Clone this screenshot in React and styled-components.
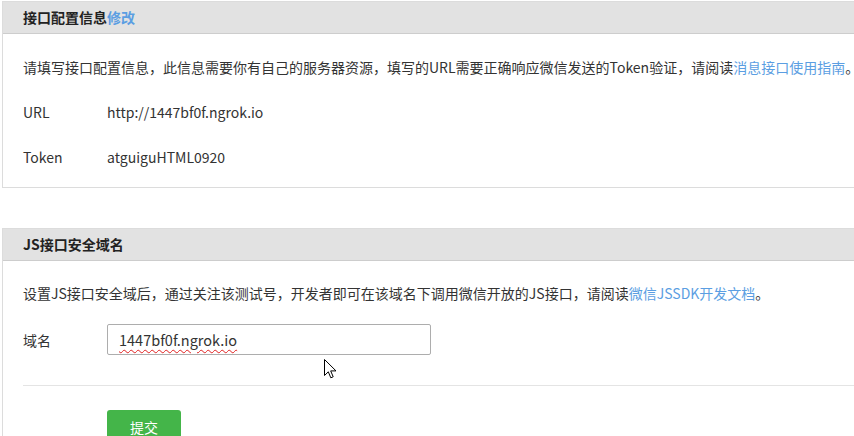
import React from 'react';
import styled, { createGlobalStyle } from 'styled-components';

/********** Styling **********/
const GlobalStyle = createGlobalStyle`
  html, body {
    margin: 0;
    padding: 0;
    background: #fff;
    overflow: hidden;
  }
  body {
    font-family: "Noto Sans CJK SC", "Noto Sans", sans-serif;
    font-size: 14px;
    color: #222;
  }
`
const Page = styled.div`
  position: relative;
  padding: 1px 0 0 2px;
  width: 854px;
  height: 436px;
  box-sizing: border-box;
  display: flex;
  flex-direction: column;
  gap: 40px;
`
const Panel = styled.section`
  border: 1px solid #dcdcdc;
  margin-right: -20px;
  background: #fff;
  flex-shrink: 0;
`
const PanelHeader = styled.h3`
  margin: 0;
  height: 31px;
  line-height: 31px;
  padding: 0 20px;
  background: #e2e2e2;
  border-bottom: 1px solid #cdcdcd;
  font-size: 14px;
  font-weight: bold;
  color: #222;
  white-space: nowrap;
`
const PanelBody = styled.div`
  padding: ${({ $compact }) => ($compact ? '23px 20px 20px' : '22px 20px 30px')};
  display: flex;
  flex-direction: column;
  gap: ${({ $gap }) => $gap || 25}px;
`
const Desc = styled.p`
  margin: 0;
  line-height: 20px;
  white-space: nowrap;
  color: #333;
`
const Link = styled.a`
  color: #5b9ee2;
  text-decoration: none;
`
const InfoRow = styled.div`
  display: grid;
  grid-template-columns: 84px 1fr;
  align-items: center;
  line-height: 20px;
  color: #333;
`
const Label = styled.span`
  color: #333;
`
const FormRow = styled.div`
  display: grid;
  grid-template-columns: 84px 324px;
  align-items: center;
`
const Field = styled.div`
  height: 31px;
  box-sizing: border-box;
  border: 1px solid #adadad;
  border-radius: 2px;
  padding: 0 11px;
  display: flex;
  align-items: center;
  font-size: 14.5px;
  color: #333;
`
const Misspelt = styled.span`
  text-decoration: underline wavy #e02020;
  text-decoration-thickness: 1px;
  text-underline-offset: 3px;
`
const Divider = styled.hr`
  margin: 9px -20px 0 0;
  border: none;
  border-top: 1px solid #e4e4e4;
`
const Actions = styled.div`
  padding-left: 84px;
  margin-top: 3px;
`
const SubmitButton = styled.button`
  width: 74px;
  height: 34px;
  border: none;
  border-radius: 3px;
  background: #44b549;
  color: #fff;
  font-family: inherit;
  font-size: 14px;
  padding: 0;
  cursor: pointer;
`
const Cursor = styled.svg`
  position: absolute;
  left: 324px;
  top: 359px;
  width: 13px;
  height: 20px;
`

/********** App Component **********/
const App = () => {
  return (
    <Page>
      <GlobalStyle />
      <Panel>
        <PanelHeader>接口配置信息<Link href="#">修改</Link></PanelHeader>
        <PanelBody $compact>
          <Desc>
            请填写接口配置信息，此信息需要你有自己的服务器资源，填写的URL需要正确响应微信发送的Token验证，请阅读
            <Link href="#">消息接口使用指南</Link>。
          </Desc>
          <InfoRow><Label>URL</Label><span>http://1447bf0f.ngrok.io</span></InfoRow>
          <InfoRow><Label>Token</Label><span>atguiguHTML0920</span></InfoRow>
        </PanelBody>
      </Panel>

      <Panel>
        <PanelHeader>JS接口安全域名</PanelHeader>
        <PanelBody $gap={21}>
          <Desc>
            设置JS接口安全域后，通过关注该测试号，开发者即可在该域名下调用微信开放的JS接口，请阅读
            <Link href="#">微信JSSDK开发文档</Link>。
          </Desc>
          <FormRow>
            <Label>域名</Label>
            <Field><Misspelt>1447bf0f.ngrok.io</Misspelt></Field>
          </FormRow>
          <Divider />
          <Actions><SubmitButton>提交</SubmitButton></Actions>
        </PanelBody>
      </Panel>

      <Cursor viewBox="0 0 13 20">
        <path d="M0.5 0.5 L0.5 16.5 L4.3 12.8 L6.8 18.8 L9.2 17.8 L6.7 11.9 L12 11.9 Z" fill="#fff" stroke="#000" strokeWidth="1" strokeLinejoin="miter" />
      </Cursor>
    </Page>
  )
}

export default App
